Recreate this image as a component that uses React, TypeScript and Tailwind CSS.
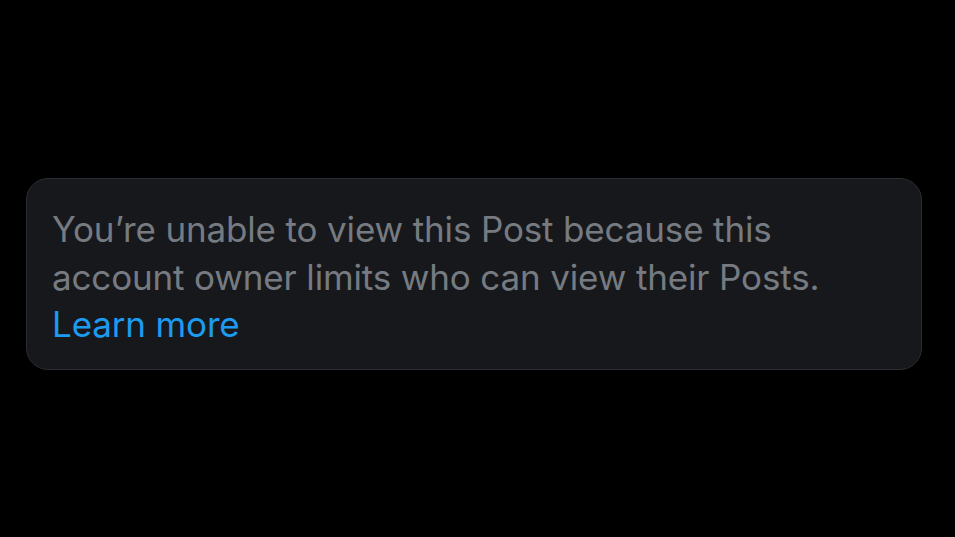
export default function App() {
  return (
    <div className="w-[955px] h-[537px] bg-black flex flex-col pt-[178px] px-[26px]" style={{ fontFamily: 'Inter, "Noto Sans", sans-serif' }}>
      <div className="w-[896px] h-[192px] rounded-[22px] bg-[#16181c] border border-[#2a2d31] pl-[25px] pt-[27px]">
        <p className="text-[35px] leading-[47.5px] text-[#767b81] tracking-[-0.15px]">
          You’re unable to view this Post because this
          <br />
          account owner limits who can view their Posts.
          <br />
          <a href="#" className="text-[#1d9bf0]">Learn more</a>
        </p>
      </div>
    </div>
  );
}
